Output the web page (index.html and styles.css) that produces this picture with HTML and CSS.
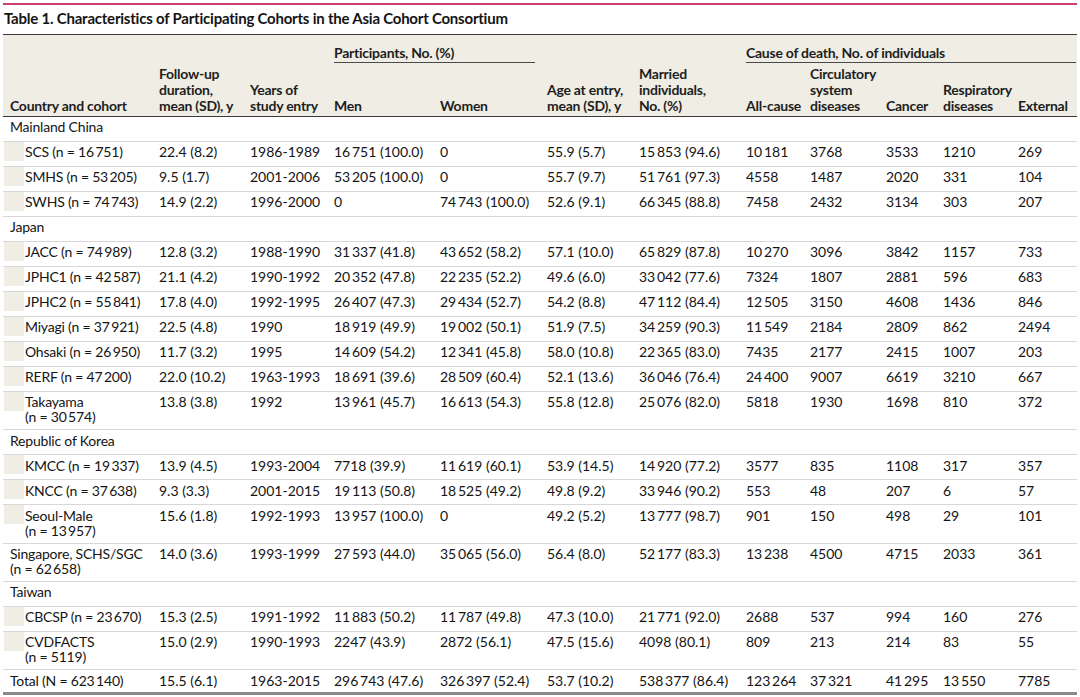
FILE: index.html
```html
<!DOCTYPE html>
<html lang="en">
<head>
<meta charset="utf-8">
<title>Table 1</title>
<link rel="stylesheet" href="styles.css">
</head>
<body>
<div class="page">
  <div class="redline"></div>
  <h1 class="title">Table 1. Characteristics of Participating Cohorts in the Asia Cohort Consortium</h1>
  <table class="tbl">
    <colgroup>
      <col class="c1"><col class="c2"><col class="c3"><col class="c4"><col class="c5"><col class="c6">
      <col class="c7"><col class="c8"><col class="c9"><col class="c10"><col class="c11"><col class="c12">
    </colgroup>
    <thead>
      <tr class="h1row">
        <th rowspan="2">Country and cohort</th>
        <th rowspan="2">Follow-up<br>duration,<br>mean (SD), y</th>
        <th rowspan="2">Years of<br>study entry</th>
        <th colspan="2" class="span"><div class="uline">Participants, No. (%)</div></th>
        <th rowspan="2">Age at entry,<br>mean (SD), y</th>
        <th rowspan="2">Married<br>individuals,<br>No. (%)</th>
        <th colspan="5" class="span last"><div class="uline">Cause of death, No. of individuals</div></th>
      </tr>
      <tr class="h2row">
        <th>Men</th>
        <th>Women</th>
        <th>All-cause</th>
        <th>Circulatory<br>system<br>diseases</th>
        <th>Cancer</th>
        <th>Respiratory<br>diseases</th>
        <th>External</th>
      </tr>
    </thead>
    <tbody>
      <tr class="grp"><td colspan="12" class="first">Mainland China</td></tr>
      <tr><td class="ind"><div class="coh"><span class="mark"></span><span class="nm">SCS (n = 16&#8201;751)</span></div></td><td>22.4 (8.2)</td><td>1986-1989</td><td>16&#8201;751 (100.0)</td><td>0</td><td>55.9 (5.7)</td><td>15&#8201;853 (94.6)</td><td>10&#8201;181</td><td>3768</td><td>3533</td><td>1210</td><td>269</td></tr>
      <tr><td class="ind"><div class="coh"><span class="mark"></span><span class="nm">SMHS (n = 53&#8201;205)</span></div></td><td>9.5 (1.7)</td><td>2001-2006</td><td>53&#8201;205 (100.0)</td><td>0</td><td>55.7 (9.7)</td><td>51&#8201;761 (97.3)</td><td>4558</td><td>1487</td><td>2020</td><td>331</td><td>104</td></tr>
      <tr><td class="ind"><div class="coh"><span class="mark"></span><span class="nm">SWHS (n = 74&#8201;743)</span></div></td><td>14.9 (2.2)</td><td>1996-2000</td><td>0</td><td>74&#8201;743 (100.0)</td><td>52.6 (9.1)</td><td>66&#8201;345 (88.8)</td><td>7458</td><td>2432</td><td>3134</td><td>303</td><td>207</td></tr>
      <tr class="grp"><td colspan="12" class="first">Japan</td></tr>
      <tr><td class="ind"><div class="coh"><span class="mark"></span><span class="nm">JACC (n = 74&#8201;989)</span></div></td><td>12.8 (3.2)</td><td>1988-1990</td><td>31&#8201;337 (41.8)</td><td>43&#8201;652 (58.2)</td><td>57.1 (10.0)</td><td>65&#8201;829 (87.8)</td><td>10&#8201;270</td><td>3096</td><td>3842</td><td>1157</td><td>733</td></tr>
      <tr><td class="ind"><div class="coh"><span class="mark"></span><span class="nm">JPHC1 (n = 42&#8201;587)</span></div></td><td>21.1 (4.2)</td><td>1990-1992</td><td>20&#8201;352 (47.8)</td><td>22&#8201;235 (52.2)</td><td>49.6 (6.0)</td><td>33&#8201;042 (77.6)</td><td>7324</td><td>1807</td><td>2881</td><td>596</td><td>683</td></tr>
      <tr><td class="ind"><div class="coh"><span class="mark"></span><span class="nm">JPHC2 (n = 55&#8201;841)</span></div></td><td>17.8 (4.0)</td><td>1992-1995</td><td>26&#8201;407 (47.3)</td><td>29&#8201;434 (52.7)</td><td>54.2 (8.8)</td><td>47&#8201;112 (84.4)</td><td>12&#8201;505</td><td>3150</td><td>4608</td><td>1436</td><td>846</td></tr>
      <tr><td class="ind"><div class="coh"><span class="mark"></span><span class="nm">Miyagi (n = 37&#8201;921)</span></div></td><td>22.5 (4.8)</td><td>1990</td><td>18&#8201;919 (49.9)</td><td>19&#8201;002 (50.1)</td><td>51.9 (7.5)</td><td>34&#8201;259 (90.3)</td><td>11&#8201;549</td><td>2184</td><td>2809</td><td>862</td><td>2494</td></tr>
      <tr><td class="ind"><div class="coh"><span class="mark"></span><span class="nm">Ohsaki (n = 26&#8201;950)</span></div></td><td>11.7 (3.2)</td><td>1995</td><td>14&#8201;609 (54.2)</td><td>12&#8201;341 (45.8)</td><td>58.0 (10.8)</td><td>22&#8201;365 (83.0)</td><td>7435</td><td>2177</td><td>2415</td><td>1007</td><td>203</td></tr>
      <tr><td class="ind"><div class="coh"><span class="mark"></span><span class="nm">RERF (n = 47&#8201;200)</span></div></td><td>22.0 (10.2)</td><td>1963-1993</td><td>18&#8201;691 (39.6)</td><td>28&#8201;509 (60.4)</td><td>52.1 (13.6)</td><td>36&#8201;046 (76.4)</td><td>24&#8201;400</td><td>9007</td><td>6619</td><td>3210</td><td>667</td></tr>
      <tr><td class="ind"><div class="coh"><span class="mark"></span><span class="nm">Takayama<br>(n = 30&#8201;574)</span></div></td><td>13.8 (3.8)</td><td>1992</td><td>13&#8201;961 (45.7)</td><td>16&#8201;613 (54.3)</td><td>55.8 (12.8)</td><td>25&#8201;076 (82.0)</td><td>5818</td><td>1930</td><td>1698</td><td>810</td><td>372</td></tr>
      <tr class="grp"><td colspan="12" class="first">Republic of Korea</td></tr>
      <tr><td class="ind"><div class="coh"><span class="mark"></span><span class="nm">KMCC (n = 19&#8201;337)</span></div></td><td>13.9 (4.5)</td><td>1993-2004</td><td>7718 (39.9)</td><td>11&#8201;619 (60.1)</td><td>53.9 (14.5)</td><td>14&#8201;920 (77.2)</td><td>3577</td><td>835</td><td>1108</td><td>317</td><td>357</td></tr>
      <tr><td class="ind"><div class="coh"><span class="mark"></span><span class="nm">KNCC (n = 37&#8201;638)</span></div></td><td>9.3 (3.3)</td><td>2001-2015</td><td>19&#8201;113 (50.8)</td><td>18&#8201;525 (49.2)</td><td>49.8 (9.2)</td><td>33&#8201;946 (90.2)</td><td>553</td><td>48</td><td>207</td><td>6</td><td>57</td></tr>
      <tr><td class="ind"><div class="coh"><span class="mark"></span><span class="nm">Seoul-Male<br>(n = 13&#8201;957)</span></div></td><td>15.6 (1.8)</td><td>1992-1993</td><td>13&#8201;957 (100.0)</td><td>0</td><td>49.2 (5.2)</td><td>13&#8201;777 (98.7)</td><td>901</td><td>150</td><td>498</td><td>29</td><td>101</td></tr>
      <tr><td class="first">Singapore, SCHS/SGC<br>(n = 62&#8201;658)</td><td>14.0 (3.6)</td><td>1993-1999</td><td>27&#8201;593 (44.0)</td><td>35&#8201;065 (56.0)</td><td>56.4 (8.0)</td><td>52&#8201;177 (83.3)</td><td>13&#8201;238</td><td>4500</td><td>4715</td><td>2033</td><td>361</td></tr>
      <tr class="grp"><td colspan="12" class="first">Taiwan</td></tr>
      <tr><td class="ind"><div class="coh"><span class="mark"></span><span class="nm">CBCSP (n = 23&#8201;670)</span></div></td><td>15.3 (2.5)</td><td>1991-1992</td><td>11&#8201;883 (50.2)</td><td>11&#8201;787 (49.8)</td><td>47.3 (10.0)</td><td>21&#8201;771 (92.0)</td><td>2688</td><td>537</td><td>994</td><td>160</td><td>276</td></tr>
      <tr><td class="ind"><div class="coh"><span class="mark"></span><span class="nm">CVDFACTS<br>(n = 5119)</span></div></td><td>15.0 (2.9)</td><td>1990-1993</td><td>2247 (43.9)</td><td>2872 (56.1)</td><td>47.5 (15.6)</td><td>4098 (80.1)</td><td>809</td><td>213</td><td>214</td><td>83</td><td>55</td></tr>
      <tr class="total"><td class="first">Total (N = 623&#8201;140)</td><td>15.5 (6.1)</td><td>1963-2015</td><td>296&#8201;743 (47.6)</td><td>326&#8201;397 (52.4)</td><td>53.7 (10.2)</td><td>538&#8201;377 (86.4)</td><td>123&#8201;264</td><td>37&#8201;321</td><td>41&#8201;295</td><td>13&#8201;550</td><td>7785</td></tr>
    </tbody>
  </table>
</div>
</body>
</html>
```

FILE: styles.css
```css
* { box-sizing: border-box; }

html, body {
  margin: 0;
  padding: 0;
  background: #ffffff;
}

body {
  font-family: Lato, "Open Sans", "Liberation Sans", sans-serif;
  font-size: 14px;
  color: #141414;
}

.page {
  padding: 3px 3px 0 3px;
  width: 1080px;
}

.redline {
  height: 2px;
  background: #c9416b;
}

.title {
  margin: 4px 0 7px 1px;
  font-size: 15px;
  line-height: 18px;
  font-weight: 700;
  letter-spacing: -0.22px;
  color: #141414;
  white-space: nowrap;
}

.tbl {
  width: 1074px;
  table-layout: fixed;
  border-collapse: separate;
  border-spacing: 0;
}

.c1 { width: 149px; }
.c2 { width: 91px; }
.c3 { width: 84px; }
.c4 { width: 106px; }
.c5 { width: 107px; }
.c6 { width: 92px; }
.c7 { width: 107px; }
.c8 { width: 64px; }
.c9 { width: 76px; }
.c10 { width: 57px; }
.c11 { width: 75px; }
.c12 { width: 66px; }

.tbl thead th {
  background: #efede4;
  font-weight: 700;
  letter-spacing: -0.25px;
  color: #1e1e1e;
  text-align: left;
  vertical-align: bottom;
  line-height: 16px;
  padding: 0 2px 2.4px 7px;
  white-space: nowrap;
  border-bottom: 1px solid #3a3a3a;
}

.tbl thead tr.h1row th {
  border-top: 1px solid #3a3a3a;
}

.tbl thead tr.h1row th.span {
  vertical-align: top;
  padding: 9.9px 5px 2px 7px;
  border-bottom: none;
}

.tbl thead tr.h1row th.span.last {
  padding-right: 1px;
}

.uline {
  padding-bottom: 1.4px;
  border-bottom: 1px solid #4a4a4a;
}

.tbl thead tr.h2row th {
  padding-top: 0.3px;
}

.tbl tbody tr {
  height: 25px;
}

.tbl tbody td {
  vertical-align: top;
  text-align: left;
  line-height: 15px;
  padding: 2.5px 2px 4.8px 7px;
  white-space: nowrap;
  border-bottom: 1px solid #d8d8d8;
}

.tbl tbody td.first {
  letter-spacing: -0.2px;
}

.tbl tbody td.ind {
  padding: 0 2px 4.8px 1px;
  letter-spacing: -0.2px;
}

.coh {
  display: flex;
  align-items: flex-start;
}

.mark {
  flex: none;
  width: 20px;
  height: 19px;
  background: #efede4;
}

.nm {
  padding: 2.5px 0 0 1px;
}

.tbl tbody tr.total td {
  border-bottom: 3px solid #8a8a8a;
}
```
